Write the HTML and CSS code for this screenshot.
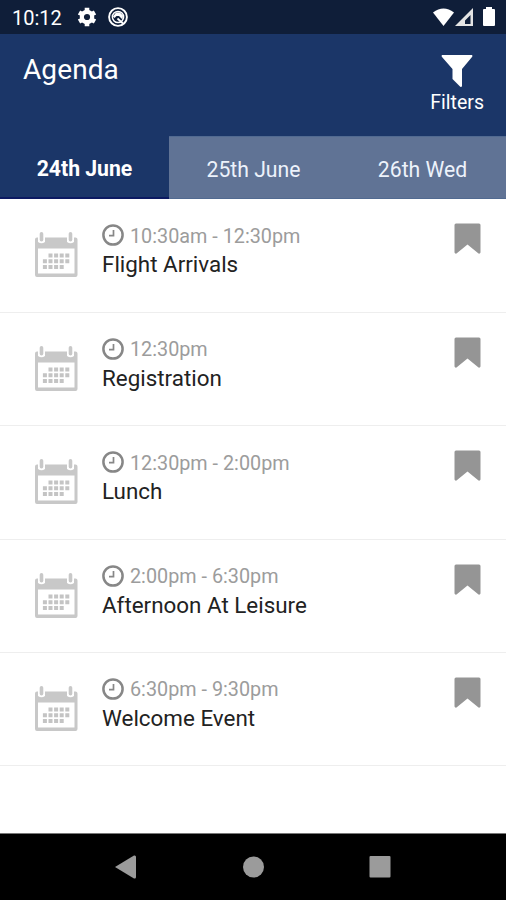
FILE: index.html
```html
<!DOCTYPE html>
<html lang="en">
<head>
<meta charset="utf-8">
<title>Agenda</title>
<link rel="stylesheet" href="styles.css">
</head>
<body>
<svg class="sprite" aria-hidden="true">
  <symbol id="calendar" viewBox="0 0 44 46">
    <path fill="#c8c8c8" fill-rule="evenodd" d="M3 5.500H41.500Q43.500 5.500 43.500 7.500V43Q43.500 45 41.500 45H3Q1 45 1 43V7.500Q1 5.500 3 5.500ZM4 16.500V41.500H40.500V16.500Z"/>
    <path fill="#fff" d="M4 4h7v6q-3.500 2.500-7 0zM33 4h7v6q-3.500 2.500-7 0z"/>
    <rect x="5.700" y="0" width="3.600" height="9.500" rx="1.800" fill="#c8c8c8"/>
    <rect x="34.700" y="0" width="3.600" height="9.500" rx="1.800" fill="#c8c8c8"/>
    <path stroke="#c4c4c4" stroke-width="4" stroke-dasharray="4 1.600" d="M14.500 23.500H35.300M8.900 29.200H35.300M8.900 35H29.700"/>
  </symbol>
  <symbol id="clock" viewBox="0 0 22 22">
    <circle cx="11" cy="11" r="9.600" fill="none" stroke="#878787" stroke-width="2.500"/>
    <path d="M11.500 6V11.700H7" fill="none" stroke="#878787" stroke-width="1.700"/>
  </symbol>
  <symbol id="bookmark" viewBox="0 0 27 31">
    <path d="M2 .5H25Q26.500 .5 26.500 2V29.500Q26 31 24.500 30.500L13.500 21.500L2.500 30.500Q1 31 .5 29.500V2Q.5 .5 2 .5Z" fill="#959595"/>
  </symbol>
</svg>
<div class="screen">
  <div class="status">
    <span class="time">10:12</span>
    <svg class="gear" viewBox="0 0 20 20"><path fill="none" stroke="#fff" stroke-width="4.600" d="M10 .8V4.500M10 15.500V19.200M2 5.400L5.300 7.300M14.700 12.700L18 14.600M2 14.600L5.300 12.700M14.700 7.300L18 5.400"/><circle cx="10" cy="10" r="5.200" fill="none" stroke="#fff" stroke-width="4.200"/></svg>
    <svg class="badge" viewBox="0 0 20 20"><circle cx="10" cy="10" r="8.900" fill="none" stroke="#fff" stroke-width="1.900"/><circle cx="10" cy="10" r="5.600" fill="none" stroke="#fff" stroke-width="1.500"/><path d="M5 9.500L8 5.500L12 5.500L15 8.500L14.500 12.500L11 9L8.500 9L6.500 11Z" fill="#fff"/><path d="M9.500 11.500L15 16.500" stroke="#fff" stroke-width="1.800"/></svg>
    <svg class="signals" viewBox="0 0 66 22"><path fill="#fff" d="M1 5.500Q11.500-2.500 22 5.500L11.500 19Z"/><path fill="#e4e4e4" fill-rule="evenodd" d="M41 1V19H23ZM38.500 8L33 13.500V17H38.500Z"/><path fill="#fff" d="M54 0H60V2H62Q63 2 63 3V18Q63 19 62 19H52Q51 19 51 18V3Q51 2 52 2H54Z"/></svg>
  </div>
  <header class="header">
    <h1>Agenda</h1>
    <div class="filters">
      <svg viewBox="0 0 32 33"><path fill="#fff" d="M1 0H31Q32 1 31 2L21 14V31.500L19.500 32L11.500 24V14L1 2Q0 1 1 0Z"/></svg>
      <span>Filters</span>
    </div>
  </header>
  <nav class="tabs">
    <span class="tab active">24th June</span>
    <span class="tab">25th June</span>
    <span class="tab">26th Wed</span>
  </nav>
  <main class="list">
    <article class="row">
      <svg class="calendar"><use href="#calendar"/></svg>
      <div class="info"><div class="when"><svg class="clock"><use href="#clock"/></svg><span>10:30am - 12:30pm</span></div><div class="name">Flight Arrivals</div></div>
      <svg class="bookmark"><use href="#bookmark"/></svg>
    </article>
    <article class="row">
      <svg class="calendar"><use href="#calendar"/></svg>
      <div class="info"><div class="when"><svg class="clock"><use href="#clock"/></svg><span>12:30pm</span></div><div class="name">Registration</div></div>
      <svg class="bookmark"><use href="#bookmark"/></svg>
    </article>
    <article class="row">
      <svg class="calendar"><use href="#calendar"/></svg>
      <div class="info"><div class="when"><svg class="clock"><use href="#clock"/></svg><span>12:30pm - 2:00pm</span></div><div class="name">Lunch</div></div>
      <svg class="bookmark"><use href="#bookmark"/></svg>
    </article>
    <article class="row">
      <svg class="calendar"><use href="#calendar"/></svg>
      <div class="info"><div class="when"><svg class="clock"><use href="#clock"/></svg><span>2:00pm - 6:30pm</span></div><div class="name">Afternoon At Leisure</div></div>
      <svg class="bookmark"><use href="#bookmark"/></svg>
    </article>
    <article class="row">
      <svg class="calendar"><use href="#calendar"/></svg>
      <div class="info"><div class="when"><svg class="clock"><use href="#clock"/></svg><span>6:30pm - 9:30pm</span></div><div class="name">Welcome Event</div></div>
      <svg class="bookmark"><use href="#bookmark"/></svg>
    </article>
  </main>
  <footer class="navbar">
    <svg viewBox="0 0 22 24"><path fill="#9b9b9b" d="M0 12L19 .5Q21 0 21 2V22Q21 24 19 23.500Z"/></svg>
    <svg viewBox="0 0 22 24"><circle cx="11.500" cy="12" r="10.500" fill="#9b9b9b"/></svg>
    <svg viewBox="0 0 22 24"><rect x=".5" y="1" width="21" height="21.500" rx="1" fill="#9b9b9b"/></svg>
  </footer>
</div>
</body>
</html>
```
FILE: styles.css
```css
* { box-sizing: border-box; }
body { margin: 0; font-family: Roboto, sans-serif; background: #fff; }
svg { display: block; flex: none; }
.sprite { display: none; }
.screen { width: 506px; height: 900px; display: flex; flex-direction: column; overflow: hidden; }

.status { height: 34px; flex: none; display: flex; align-items: center; background: #0f1e39; color: #fff; padding: 0 8px 0 12px; }
.time { font-size: 20px; line-height: 34px; width: 65px; padding-top: 2px; }
.gear { width: 20px; height: 20px; }
.badge { width: 20px; height: 20px; margin-left: 11px; }
.signals { width: 66px; height: 22px; margin: 2px 0 0 auto; }

.header { height: 102px; flex: none; display: flex; justify-content: space-between; background: #1b3668; color: #fff; padding: 0 22px 0 23px; }
h1 { margin: 19px 0 0; font-size: 28px; line-height: 34px; font-weight: 400; letter-spacing: 0.1px; }
.filters { display: flex; flex-direction: column; align-items: center; padding-top: 21px; font-size: 19.5px; line-height: 24px; }
.filters svg { width: 32px; height: 33px; }
.filters span { margin-top: 3px; }

.tabs { height: 63px; flex: none; display: grid; grid-template-columns: 169px 169px 168px; background: #1b3668; }
.tab { display: flex; align-items: center; justify-content: center; background: #607395; color: #edf2fb; font-size: 21.2px; padding-top: 3px; border-top: 1px solid #516a91; border-bottom: 1px solid #516a91; }
.tab:last-child { padding-left: 1px; }
.tab.active { background: #1b3668; color: #fff; font-weight: 700; padding-top: 3px; border-top-color: #1b3668; border-bottom: 2px solid #0c1a62; }

.list { flex: 1; background: #fff; padding-top: 0.4px; }
.row { height: 113.4px; display: flex; align-items: flex-start; padding: 24px 25px 0 34px; border-bottom: 1.5px solid #eee; }
.calendar { width: 44px; height: 46px; margin-top: 9px; }
.info { flex: 1; margin-left: 24px; }
.when { display: flex; align-items: center; height: 26px; color: #9c9c9c; font-size: 19.8px; font-weight: 400; }
.clock { width: 22px; height: 22px; margin: -2px 6px 0 0; }
.name { color: #222; font-size: 22.4px; line-height: 30px; font-weight: 400; }
.bookmark { width: 27px; height: 31px; }

.navbar { height: 67px; flex: none; background: #000; display: flex; justify-content: space-between; align-items: center; padding: 0 115px; border-top: 1px solid #777; }
.navbar svg { width: 22px; height: 24px; }
```
